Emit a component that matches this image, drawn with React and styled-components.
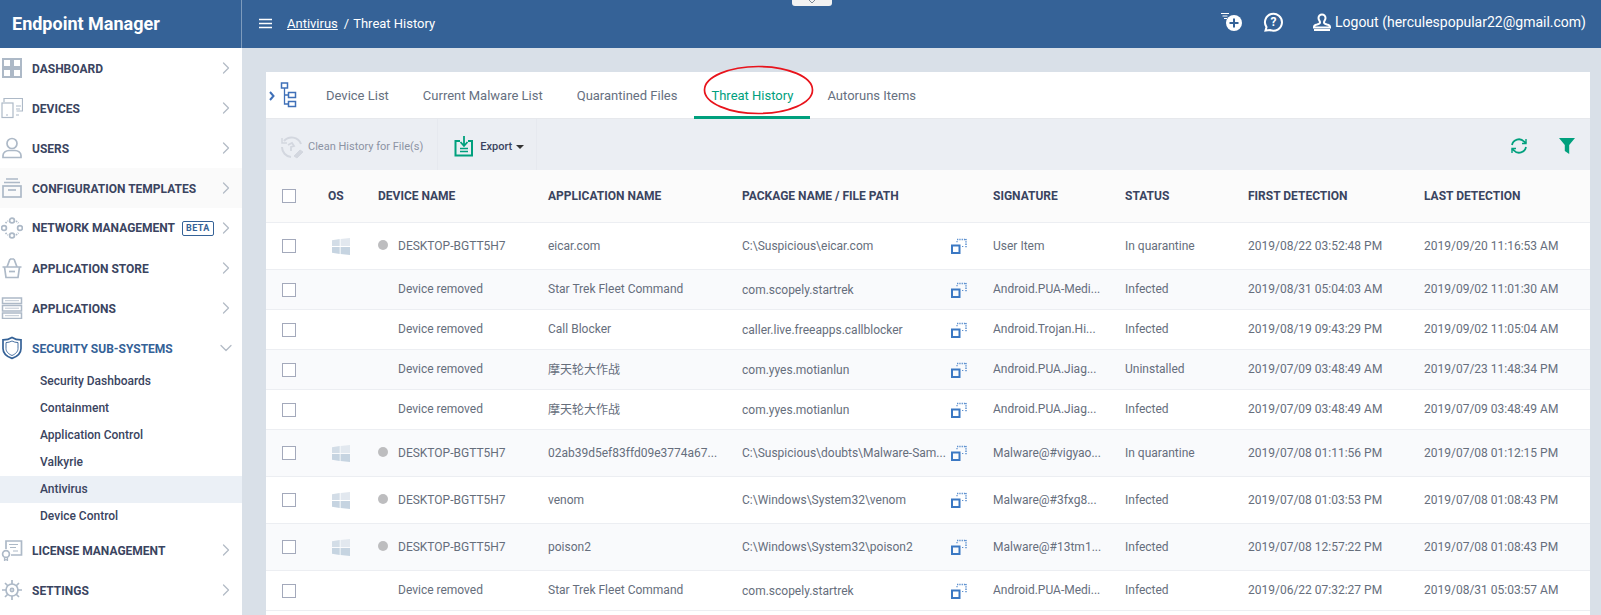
import React from "react";
import styled, { createGlobalStyle } from "styled-components";
import { FiChevronRight, FiChevronDown } from "react-icons/fi";

const GlobalStyle = createGlobalStyle`
  html, body {
    margin: 0;
    height: 100%;
    overflow: hidden;
    background: #d9e0e8;
    font-family: Roboto, "Noto Sans CJK SC", sans-serif;
  }
  * { box-sizing: border-box; }
`;

const Shell = styled.div`
  display: grid;
  grid-template-columns: 242px 1fr;
  grid-template-rows: 48px 1fr;
  width: 1601px;
  height: 615px;
  overflow: hidden;
`;

const Brand = styled.div`
  background: #356297;
  border-right: 1px solid #7d9bbd;
  color: #fff;
  font-size: 18px;
  font-weight: 700;
  padding-left: 12px;
  display: flex;
  align-items: center;
  padding-bottom: 2px;
`;

const TopBar = styled.header`
  position: relative;
  background: #356297;
  color: #fff;
  display: flex;
  align-items: center;
  padding: 0 15px 2px 17px;
  font-size: 13px;
`;

const PullTab = styled.div`
  position: absolute;
  left: 550px;
  top: 0;
  width: 40px;
  height: 6px;
  background: #f2f2f2;
  border-radius: 0 0 3px 3px;
  display: flex;
  justify-content: center;
`;

const Crumb = styled.span`
  margin-left: 15px;
  text-decoration: underline;
`;

const CrumbSep = styled.span`
  margin: 0 4px 0 6px;
`;

const TopActions = styled.div`
  margin-left: auto;
  margin-bottom: 2px;
  display: flex;
  align-items: center;
`;

const ActionSpacer = styled.span`
  width: ${(p) => p.$w}px;
`;

const Logout = styled.span`
  font-size: 14px;
  margin-left: 4px;
`;

const Sidebar = styled.nav`
  background: #fff;
`;

const NavItem = styled.div`
  height: 40px;
  display: grid;
  grid-template-columns: 32px 1fr 20px;
  align-items: center;
  padding: 0 6px 0 0;
  background: ${(p) => (p.$soft ? "#fafafa" : "transparent")};
  color: ${(p) => (p.$open ? "#356297" : "#3a4460")};
  font-size: 12px;
  font-weight: 700;
  white-space: nowrap;
`;

const NavIcon = styled.span`
  display: flex;
  justify-content: flex-start;
  padding-left: 1px;
`;

const NavLabel = styled.span`
  display: flex;
  align-items: center;
  padding-top: ${(p) => (p.$flat ? 0 : 2)}px;
`;

const Beta = styled.span`
  margin-left: 7px;
  border: 1px solid #356297;
  border-radius: 2px;
  color: #356297;
  font-size: 9px;
  line-height: 13px;
  padding: 0 3px;
  letter-spacing: 0.4px;
`;

const SubItem = styled.div`
  height: 27px;
  display: flex;
  align-items: center;
  padding: 0 0 2px 40px;
  font-size: 12px;
  font-weight: 500;
  color: #3a4460;
  background: ${(p) => (p.$active ? "#ebf0f6" : "transparent")};
`;

const Main = styled.main`
  padding: 24px 11px 0 24px;
  min-width: 0;
`;

const Card = styled.section`
  background: #fff;
  height: 100%;
`;

const Tabs = styled.div`
  height: 47px;
  display: flex;
  align-items: stretch;
  border-bottom: 1px solid #e6e8ec;
`;

const TreeToggle = styled.div`
  width: 43px;
  display: flex;
  align-items: center;
  padding-left: 3px;
`;

const Tab = styled.div`
  position: relative;
  display: flex;
  align-items: center;
  padding: 2px 17px 0;
  margin-bottom: -1px;
  font-size: 13px;
  color: ${(p) => (p.$active ? "#00a07d" : "#66707f")};
  border-bottom: 3px solid ${(p) => (p.$active ? "#00a07d" : "transparent")};
`;

const Ring = styled.svg`
  position: absolute;
  left: 9px;
  top: -7px;
`;

const Toolbar = styled.div`
  height: 51px;
  background: #ebeef3;
  display: flex;
  align-items: center;
`;

const ToolButton = styled.div`
  height: 100%;
  display: flex;
  align-items: center;
  gap: ${(p) => p.$gap}px;
  padding: 4px ${(p) => p.$right}px 0 ${(p) => p.$left}px;
  border-right: 1px solid #e6e9ef;
  font-size: 11px;
  font-weight: ${(p) => (p.$dim ? 400 : 500)};
  color: ${(p) => (p.$dim ? "#8b93a3" : "#3a4460")};
`;

const Caret = styled.span`
  margin-left: -2px;
  border-top: 4px solid #333;
  border-left: 4px solid transparent;
  border-right: 4px solid transparent;
`;

const ToolRight = styled.div`
  margin-left: auto;
  display: flex;
  align-items: center;
  gap: 31px;
  padding: 2px 15px 0 0;
`;

const Row = styled.div`
  display: grid;
  grid-template-columns: 62px 50px 170px 194px 251px 132px 123px 176px 1fr;
  align-items: center;
  height: ${(p) => p.$h}px;
  border-bottom: 1px solid #eceef2;
  background: ${(p) => (p.$tint ? "#f9fafc" : "#fff")};
  font-size: 12px;
  color: #666e7c;
`;

const HeadRow = styled(Row)`
  background: #fbfbfb;
  color: #3a4460;
  font-weight: 700;
`;

const Check = styled.span`
  width: 14px;
  height: 14px;
  margin-left: 16px;
  border: 1px solid #a3a9bb;
  background: #fff;
`;

const OsCell = styled.span`
  display: flex;
  padding-left: 4px;
`;

const Cell = styled.span`
  white-space: nowrap;
  padding-bottom: ${(p) => (p.$lift ? 2 : 0)}px;
`;

const Device = styled(Cell)`
  display: flex;
  align-items: center;
  padding-left: 20px;
  position: relative;
`;

const Dot = styled.span`
  position: absolute;
  left: 0;
  top: 50%;
  margin-top: -6px;
  width: 10px;
  height: 10px;
  border-radius: 50%;
  background: #bdbdbf;
`;

const PathCell = styled.div`
  display: flex;
  align-items: center;
  justify-content: space-between;
  padding-right: 26px;
  white-space: nowrap;
  min-width: 0;
  svg { flex-shrink: 0; }
`;

const NavGlyph = ({ d }) => (
  <svg width="22" height="22" viewBox="0 0 22 22" fill="none" stroke="#adb9c7" strokeWidth="1.7">
    {d}
  </svg>
);

const icons = {
  dashboard: (
    <g strokeWidth="2">
      <rect x="2" y="2" width="8" height="8" />
      <rect x="12" y="2" width="8" height="8" />
      <rect x="2" y="12" width="8" height="8" />
      <rect x="12" y="12" width="8" height="8" />
    </g>
  ),
  devices: (
    <g strokeWidth="1.2">
      <path d="M3 5V1.500h18.500v12.500h-6" />
      <rect x="1" y="6" width="11" height="14.500" />
      <path d="M5 18h2M15 9h5M15 12h4M15 18h3" />
    </g>
  ),
  users: (
    <>
      <circle cx="11" cy="6.500" r="5" />
      <path d="M2 20.500v-2c0-3 3-5 6-5h6c3 0 6 2 6 5v2z" />
    </>
  ),
  config: (
    <>
      <path d="M5 2h12M3 5.500h16" />
      <rect x="2" y="9" width="18" height="11" />
      <path d="M7 13h8" />
    </>
  ),
  network: (
    <>
      <circle cx="11" cy="3.500" r="2.400" />
      <circle cx="3" cy="11" r="2.400" />
      <circle cx="19" cy="11" r="2.400" />
      <circle cx="11" cy="18.500" r="2.400" />
      <path d="M4.500 6l2.500-2M15 4l2.500 2M4.500 16l2.500 2M15 18l2.500-2" strokeDasharray="1.500 1" />
    </>
  ),
  store: (
    <>
      <path d="M1.500 10h19M3.500 10l1.500 10.500h12l1.500-10.500M6 10l3-8M16 10l-3-8M9 2h4" />
      <path d="M8 14.500h6" />
    </>
  ),
  apps: (
    <g strokeWidth="1.500">
      <rect x="1.500" y="1" width="19" height="5.500" />
      <rect x="1.500" y="8.500" width="19" height="5.500" />
      <rect x="1.500" y="16" width="19" height="5.500" />
      <path d="M4 3.700h14M4 11.200h14M4 18.700h14" strokeWidth="0.800" />
    </g>
  ),
  license: (
    <>
      <path d="M5 10V2h15.500v14H10" />
      <path d="M8 5.500h9M9 8.500h6M12 12h5" strokeWidth="1.100" />
      <circle cx="5" cy="15" r="3.400" />
      <path d="M3.500 18.500v3l1.500-1 1.500 1v-3" strokeWidth="1.200" />
    </>
  ),
  settings: (
    <>
      <circle cx="11" cy="11" r="6" />
      <circle cx="11" cy="11" r="1.600" />
      <path d="M11 1v4M11 17v4M1 11h4M17 11h4M4 4l3 3M15 15l3 3M18 4l-3 3M7 15l-3 3" />
    </>
  ),
};

const ShieldIcon = () => (
  <svg width="22" height="24" viewBox="0 0 22 24" fill="none" stroke="#356297">
    <path d="M11 1.500c2.500 1.600 5.500 2.400 9 2.400v8.500c0 4.600-3.600 8-9 10-5.400-2-9-5.400-9-10V3.900c3.500 0 6.500-.8 9-2.400z" strokeWidth="1.700" />
    <path d="M11 5c1.800 1 3.800 1.500 6 1.600v5.900c0 3.200-2.500 5.500-6 7-3.500-1.500-6-3.800-6-7V6.600c2.200-.1 4.200-.6 6-1.600z" strokeWidth="0.900" />
  </svg>
);

const WindowsIcon = () => (
  <svg width="18" height="17" viewBox="0 0 18 17">
    <path d="M0 2.200l7.700-1.100v6.900H0z" fill="#d3dde7" />
    <path d="M8.600 1L18 0v8H8.600z" fill="#e2e8ef" />
    <path d="M0 9h7.700v6.900L0 14.800z" fill="#c6d4e1" />
    <path d="M8.600 9H18v8l-9.400-1z" fill="#c6d4e1" />
  </svg>
);

const ExpandIcon = () => (
  <svg width="16" height="16" viewBox="0 0 16 16" fill="none">
    <rect x="1" y="7.500" width="7.500" height="7.500" stroke="#3b78c3" strokeWidth="2" />
    <path d="M6 1.500h9.500M15 1v8.500" stroke="#5c90cf" strokeWidth="1.500" strokeDasharray="1.300 1" />
    <path d="M6 3v2M11 8.500h2" stroke="#5c90cf" strokeWidth="1.200" strokeDasharray="1.300 1" />
  </svg>
);

const TreeIcon = () => (
  <svg width="30" height="26" viewBox="0 0 30 26" fill="none" stroke="#3f70b8">
    <path d="M1 10l3.500 4L1 18" strokeWidth="2" />
    <rect x="12.500" y="1" width="6" height="5" strokeWidth="1.500" />
    <path d="M15.500 6v16h4M15.500 13h4" strokeWidth="1.300" />
    <rect x="19.500" y="10.500" width="7" height="5" strokeWidth="1.500" />
    <rect x="19.500" y="19.500" width="7" height="5" strokeWidth="1.500" />
  </svg>
);

const HistoryIcon = () => (
  <svg width="24" height="24" viewBox="0 0 24 24" fill="none" stroke="#d3d7df">
    <path d="M4 6A10 10 0 0 1 21 9M2 12a10 10 0 0 0 9 10" strokeWidth="2" />
    <path d="M2 3v5h5" strokeWidth="1.500" />
    <path d="M8 10l4-2 2 3-3 1v4" strokeWidth="1.800" />
    <path d="M14 21l6-6 3 2-6 6z" fill="#d3d7df" />
  </svg>
);

const ExportIcon = () => (
  <svg width="20" height="21" viewBox="0 0 20 21" fill="none" stroke="#00a07d">
    <path d="M6 5H1.500v14.500h16.500V5H14" strokeWidth="2" />
    <path d="M10 0v9M6.500 6l3.500 4 3.500-4" strokeWidth="1.800" />
    <path d="M6 12.500h8M6 15.500h8" strokeWidth="1.500" />
  </svg>
);

const RefreshIcon = () => (
  <svg width="18" height="18" viewBox="0 0 18 18" fill="none" stroke="#00a07d" strokeWidth="1.800">
    <path d="M2 8a7 7 0 0 1 12-3.500L16 6" />
    <path d="M16 2v4.500h-4" strokeWidth="1.400" />
    <path d="M16 10a7 7 0 0 1-12 3.500L2 12" />
    <path d="M2 16v-4.500h4" strokeWidth="1.400" />
  </svg>
);

const FilterIcon = () => (
  <svg width="16" height="16" viewBox="0 0 16 16">
    <path d="M0 0h16l-5.800 7v9l-4.400-3V7z" fill="#00a07d" />
  </svg>
);

const AddListIcon = () => (
  <svg width="22" height="20" viewBox="0 0 22 20">
    <path d="M0 1.500h8M1.500 4h5M3 6.500h3" stroke="#fff" strokeWidth="1" />
    <circle cx="13" cy="11" r="8" fill="#fff" />
    <path d="M13 6.500v9M8.500 11h9" stroke="#356297" strokeWidth="2" />
  </svg>
);

const HelpIcon = () => (
  <svg width="20" height="20" viewBox="0 0 20 20" fill="none">
    <path d="M2.500 18.500l1-3.400A8.500 8.500 0 1 1 7 18z" stroke="#fff" strokeWidth="2" />
    <text x="10.500" y="14" fontSize="12" fontWeight="700" fontFamily="Roboto, sans-serif" fill="#fff" textAnchor="middle">?</text>
  </svg>
);

const LogoutIcon = () => (
  <svg width="18" height="18" viewBox="0 0 18 18" fill="none" stroke="#fff" strokeWidth="2">
    <path d="M9 1.500a3.500 3.500 0 0 1 3.500 3.500c0 2-1.500 3-1.500 4.500 0 1 1 1.500 3 2 2 .4 3 1 3 2.500v.5H1v-.5c0-1.500 1-2.100 3-2.500 2-.5 3-1 3-2C7 8 5.500 7 5.500 5A3.500 3.500 0 0 1 9 1.500z" />
    <path d="M1 17h16" />
  </svg>
);

const MenuIcon = () => (
  <svg width="13" height="11" viewBox="0 0 13 11" stroke="#fff" strokeWidth="1.600">
    <path d="M0 1.500h13M0 5.500h13M0 9.500h13" />
  </svg>
);

const PullIcon = () => (
  <svg width="10" height="4" viewBox="0 0 10 4" fill="none" stroke="#7f8b99" strokeWidth="1">
    <path d="M2 0l3 3 3-3" />
  </svg>
);

const navTop = [
  ["DASHBOARD", "dashboard"],
  ["DEVICES", "devices"],
  ["USERS", "users"],
  ["CONFIGURATION TEMPLATES", "config", "soft"],
  ["NETWORK MANAGEMENT", "network", "beta"],
  ["APPLICATION STORE", "store"],
  ["APPLICATIONS", "apps"],
];

const subItems = [
  "Security Dashboards",
  "Containment",
  "Application Control",
  "Valkyrie",
  "Antivirus",
  "Device Control",
];

const tabs = ["Device List", "Current Malware List", "Quarantined Files", "Threat History", "Autoruns Items"];

const DESK = "DESKTOP-BGTT5H7";
const GONE = "Device removed";

const rows = [
  [47, true, DESK, "eicar.com", "C:\\Suspicious\\eicar.com", "User Item", "In quarantine", "2019/08/22 03:52:48 PM", "2019/09/20 11:16:53 AM"],
  [40, false, GONE, "Star Trek Fleet Command", "com.scopely.startrek", "Android.PUA-Medi...", "Infected", "2019/08/31 05:04:03 AM", "2019/09/02 11:01:30 AM"],
  [40, false, GONE, "Call Blocker", "caller.live.freeapps.callblocker", "Android.Trojan.Hi...", "Infected", "2019/08/19 09:43:29 PM", "2019/09/02 11:05:04 AM"],
  [40, false, GONE, "摩天轮大作战", "com.yyes.motianlun", "Android.PUA.Jiag...", "Uninstalled", "2019/07/09 03:48:49 AM", "2019/07/23 11:48:34 PM"],
  [40, false, GONE, "摩天轮大作战", "com.yyes.motianlun", "Android.PUA.Jiag...", "Infected", "2019/07/09 03:48:49 AM", "2019/07/09 03:48:49 AM"],
  [47, true, DESK, "02ab39d5ef83ffd09e3774a67...", "C:\\Suspicious\\doubts\\Malware-Sam...", "Malware@#vigyao...", "In quarantine", "2019/07/08 01:11:56 PM", "2019/07/08 01:12:15 PM"],
  [47, true, DESK, "venom", "C:\\Windows\\System32\\venom", "Malware@#3fxg8...", "Infected", "2019/07/08 01:03:53 PM", "2019/07/08 01:08:43 PM"],
  [47, true, DESK, "poison2", "C:\\Windows\\System32\\poison2", "Malware@#13tm1...", "Infected", "2019/07/08 12:57:22 PM", "2019/07/08 01:08:43 PM"],
  [40, false, GONE, "Star Trek Fleet Command", "com.scopely.startrek", "Android.PUA-Medi...", "Infected", "2019/06/22 07:32:27 PM", "2019/08/31 05:03:57 AM"],
];

const Chevron = ({ open }) =>
  open ? (
    <FiChevronDown size={20} color="#b3bbc6" strokeWidth={1.5} />
  ) : (
    <FiChevronRight size={20} color="#b3bbc6" strokeWidth={1.5} />
  );

export default function App() {
  return (
    <>
      <GlobalStyle />
      <Shell>
        <Brand>Endpoint Manager</Brand>
        <TopBar>
          <PullTab>
            <PullIcon />
          </PullTab>
          <MenuIcon />
          <Crumb>Antivirus</Crumb>
          <CrumbSep>/</CrumbSep>
          Threat History
          <TopActions>
            <AddListIcon />
            <ActionSpacer $w={20} />
            <HelpIcon />
            <ActionSpacer $w={30} />
            <LogoutIcon />
            <Logout>Logout (herculespopular22@gmail.com)</Logout>
          </TopActions>
        </TopBar>

        <Sidebar>
          {navTop.map(([label, icon, flag]) => (
            <NavItem key={label} $soft={flag === "soft"}>
              <NavIcon>
                <NavGlyph d={icons[icon]} />
              </NavIcon>
              <NavLabel $flat={flag === "beta"}>
                {label}
                {flag === "beta" && <Beta>BETA</Beta>}
              </NavLabel>
              <Chevron />
            </NavItem>
          ))}
          <NavItem $open>
            <NavIcon>
              <ShieldIcon />
            </NavIcon>
            <NavLabel>SECURITY SUB-SYSTEMS</NavLabel>
            <Chevron open />
          </NavItem>
          {subItems.map((s) => (
            <SubItem key={s} $active={s === "Antivirus"}>
              {s}
            </SubItem>
          ))}
          <NavItem>
            <NavIcon>
              <NavGlyph d={icons.license} />
            </NavIcon>
            <NavLabel>LICENSE MANAGEMENT</NavLabel>
            <Chevron />
          </NavItem>
          <NavItem>
            <NavIcon>
              <NavGlyph d={icons.settings} />
            </NavIcon>
            <NavLabel>SETTINGS</NavLabel>
            <Chevron />
          </NavItem>
        </Sidebar>

        <Main>
          <Card>
            <Tabs>
              <TreeToggle>
                <TreeIcon />
              </TreeToggle>
              {tabs.map((t) => (
                <Tab key={t} $active={t === "Threat History"}>
                  {t}
                  {t === "Threat History" && (
                    <Ring width="111" height="50" viewBox="0 0 111 50" fill="none">
                      <ellipse cx="55.500" cy="25" rx="54" ry="23.500" stroke="#e8141c" strokeWidth="1.700" />
                    </Ring>
                  )}
                </Tab>
              ))}
            </Tabs>
            <Toolbar>
              <ToolButton $dim $gap={4} $left={14} $right={14}>
                <HistoryIcon />
                Clean History for File(s)
              </ToolButton>
              <ToolButton $gap={6} $left={16} $right={12}>
                <ExportIcon />
                Export
                <Caret />
              </ToolButton>
              <ToolRight>
                <RefreshIcon />
                <FilterIcon />
              </ToolRight>
            </Toolbar>
            <HeadRow $h={53}>
              <Check />
              <span>OS</span>
              <span>DEVICE NAME</span>
              <span>APPLICATION NAME</span>
              <span>PACKAGE NAME / FILE PATH</span>
              <span>SIGNATURE</span>
              <span>STATUS</span>
              <span>FIRST DETECTION</span>
              <span>LAST DETECTION</span>
            </HeadRow>
            {rows.map((r, i) => {
              const lift = r[0] === 40;
              return (
                <Row key={i} $h={r[0]} $tint={i % 2 === 1}>
                  <Check />
                  <OsCell>{r[1] && <WindowsIcon />}</OsCell>
                  <Device $lift={lift}>
                    {r[1] && <Dot />}
                    {r[2]}
                  </Device>
                  <Cell $lift={lift}>{r[3]}</Cell>
                  <PathCell>
                    {r[4]}
                    <ExpandIcon />
                  </PathCell>
                  <Cell $lift={lift}>{r[5]}</Cell>
                  <Cell $lift={lift}>{r[6]}</Cell>
                  <Cell $lift={lift}>{r[7]}</Cell>
                  <Cell $lift={lift}>{r[8]}</Cell>
                </Row>
              );
            })}
          </Card>
        </Main>
      </Shell>
    </>
  );
}
